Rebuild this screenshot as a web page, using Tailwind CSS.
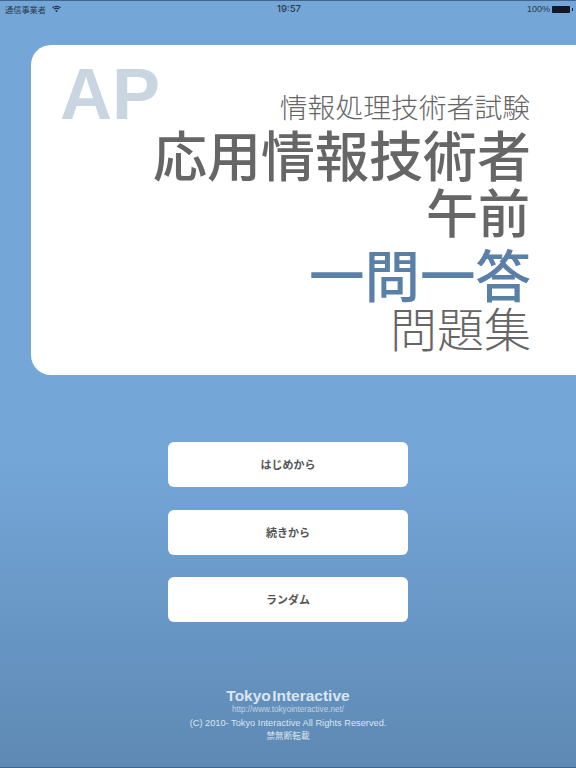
<!DOCTYPE html>
<html lang="ja">
<head>
  <meta charset="UTF-8" />
  <meta name="viewport" content="width=device-width, initial-scale=1.0">
  <title>AP</title>
  <script src="https://cdn.jsdelivr.net/npm/@tailwindcss/browser@4"></script>
</head>
<body class="w-[576px] h-[768px] overflow-hidden font-['Liberation_Sans','Noto_Sans_CJK_JP',sans-serif]">
  <div class="h-[768px] flex flex-col bg-linear-to-b from-[#74a6d8] via-[#74a6d8] via-60% to-[#5e89b4] border-t border-b border-[#3f6590]">

    <!-- status bar -->
    <div class="h-[15px] mt-[1px] pl-[5px] pr-[3px] flex items-center justify-between text-[9px] text-[#2b3a4c]">
      <div class="w-[200px] flex items-center gap-[6px]">
        <span class="text-[8.2px] font-['Noto_Sans_CJK_JP']">通信事業者</span>
        <svg width="9" height="8" viewBox="0 0 10 8" fill="none" stroke="#1f2a38" stroke-width="1.2">
          <path d="M0.6 2.6C3 0.4 7 0.4 9.4 2.6" />
          <path d="M2.2 4.2C3.8 2.9 6.2 2.9 7.8 4.2" />
          <path d="M5 7.6L3.6 5.9C4.4 5.2 5.6 5.2 6.4 5.9Z" fill="#1f2a38" stroke="none" />
        </svg>
      </div>
      <span class="text-[9.5px] font-medium font-['Inter']">19:57</span>
      <div class="w-[200px] flex items-center justify-end gap-[2px]">
        <span>100%</span>
        <div class="w-[18px] h-[7px] bg-[#111827] rounded-[1px]"></div>
        <div class="w-[1px] h-[3px] bg-[#111827]"></div>
      </div>
    </div>

    <!-- title card -->
    <div class="relative mt-[28px] ml-[31px] h-[330px] bg-white rounded-l-[20px] pr-[45px] flex flex-col items-end text-[#666666] font-['Noto_Sans_CJK_JP']">
      <div class="absolute left-[29px] top-[9px] text-[#c9d6e1] text-[72px] leading-[80px] font-bold font-['Liberation_Sans']">AP</div>
      <div class="mt-[44px] mr-[1px] text-[27.8px] leading-[34px] font-light">情報処理技術者試験</div>
      <div class="text-[54px] leading-[62px] font-medium">応用情報技術者</div>
      <div class="mt-[-3px] mr-[1px] text-[52px] leading-[58px] font-medium">午前</div>
      <div class="mt-[1px] text-[55.5px] leading-[64px] font-medium text-[#5a80a8]">一問一答</div>
      <div class="mt-[-4px] text-[47px] leading-[52px] font-light">問題集</div>
    </div>

    <!-- buttons -->
    <div class="mt-[67px] flex flex-col items-center gap-[22.5px]">
      <button class="w-[240px] h-[45px] bg-white rounded-[6px] text-[11px] font-bold text-[#555555] font-['Noto_Sans_CJK_JP']">はじめから</button>
      <button class="w-[240px] h-[45px] bg-white rounded-[6px] text-[11px] font-bold text-[#555555] font-['Noto_Sans_CJK_JP']">続きから</button>
      <button class="w-[240px] h-[45px] bg-white rounded-[6px] text-[11px] font-bold text-[#555555] font-['Noto_Sans_CJK_JP']">ランダム</button>
    </div>

    <!-- footer -->
    <div class="mt-[65px] flex flex-col items-center text-[#dbe5f0]">
      <div class="text-[15.5px] leading-[17px] font-bold [word-spacing:-3px]">Tokyo Interactive</div>
      <div class="mt-[1px] text-[8.15px] leading-[10px] text-[#c2d2e3]">http://www.tokyointeractive.net/</div>
      <div class="mt-[2px] text-[9.25px] leading-[13px]">(C) 2010- Tokyo Interactive All Rights Reserved.</div>
      <div class="mt-[-1px] text-[8.6px] leading-[13px] font-['Noto_Sans_CJK_JP']">禁無断転載</div>
    </div>
  </div>
</body>
</html>
